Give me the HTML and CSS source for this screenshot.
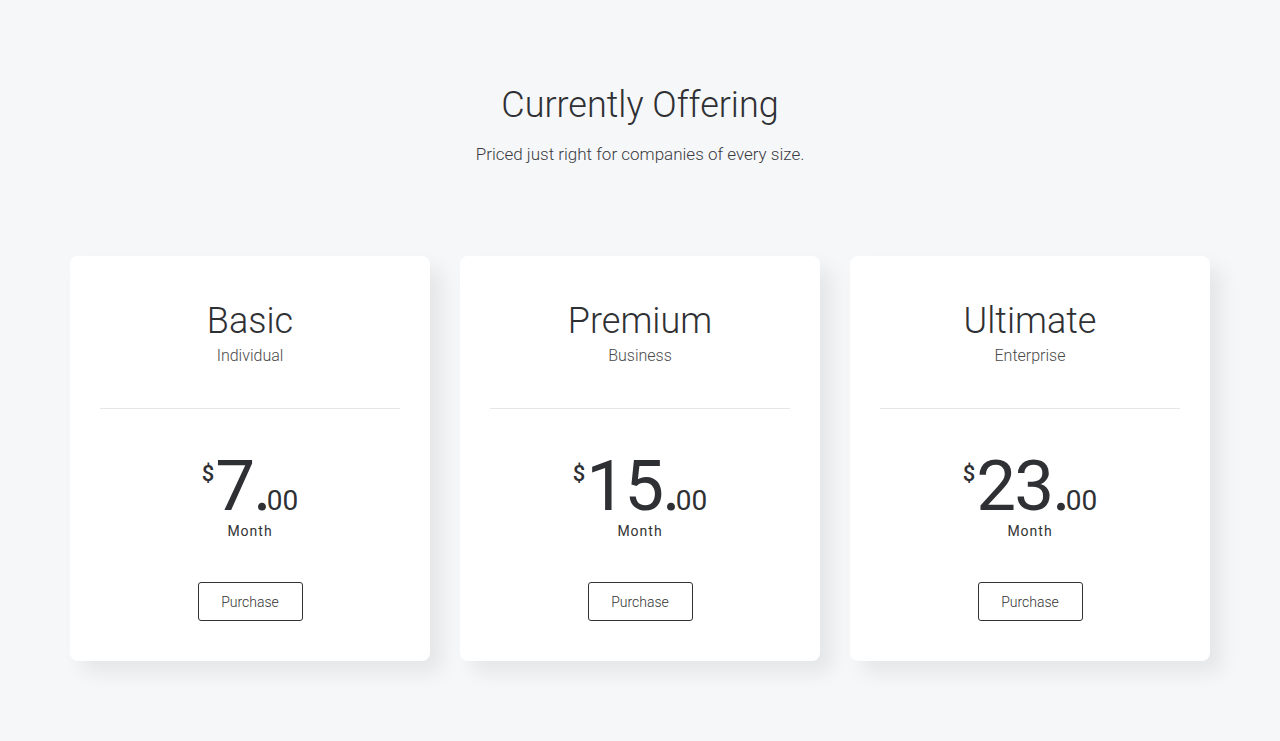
FILE: index.html
```html
<!DOCTYPE html>
<html lang="en">
<head>
<meta charset="utf-8">
<title>Currently Offering</title>
<link rel="stylesheet" href="styles.css">
</head>
<body>
<section class="pricing">
  <header class="intro">
    <h1 class="title">Currently Offering</h1>
    <p class="subtitle">Priced just right for companies of every size.</p>
  </header>
  <div class="cards">
    <article class="card">
      <h2 class="plan">Basic</h2>
      <p class="tier">Individual</p>
      <hr class="divider">
      <div class="price"><span class="currency">$</span><span class="amount">7.</span><span class="cents">00</span></div>
      <p class="period">Month</p>
      <button class="buy" type="button">Purchase</button>
    </article>
    <article class="card">
      <h2 class="plan">Premium</h2>
      <p class="tier">Business</p>
      <hr class="divider">
      <div class="price"><span class="currency">$</span><span class="amount">15.</span><span class="cents">00</span></div>
      <p class="period">Month</p>
      <button class="buy" type="button">Purchase</button>
    </article>
    <article class="card">
      <h2 class="plan">Ultimate</h2>
      <p class="tier">Enterprise</p>
      <hr class="divider">
      <div class="price"><span class="currency">$</span><span class="amount">23.</span><span class="cents">00</span></div>
      <p class="period">Month</p>
      <button class="buy" type="button">Purchase</button>
    </article>
  </div>
</section>
</body>
</html>
```

FILE: styles.css
```css
html, body {
  margin: 0;
  padding: 0;
}
body {
  background: #f6f7f9;
  font-family: Roboto, "Liberation Sans", sans-serif;
  color: #333;
  min-height: 741px;
}
.pricing {
  width: 1140px;
  margin: 0 auto;
}
.intro {
  text-align: center;
  padding-top: 84px;
}
.title {
  margin: 0;
  font-size: 36px;
  line-height: 43px;
  font-weight: 300;
  color: #2f3034;
}
.subtitle {
  margin: 15px 0 0;
  font-size: 17px;
  line-height: 24px;
  font-weight: 300;
  color: #3a3b3f;
}
.cards {
  display: flex;
  gap: 30px;
  margin-top: 90px;
}
.card {
  flex: 1;
  background: #fff;
  border-radius: 8px;
  box-shadow: 12px 12px 20px rgba(0, 0, 0, 0.07);
  padding: 41px 30px 40px;
  text-align: center;
  display: flex;
  flex-direction: column;
  align-items: center;
}
.plan {
  margin: 0;
  font-size: 36px;
  line-height: 48px;
  font-weight: 300;
  color: #2f3034;
}
.tier {
  margin: 1px 0 0;
  font-size: 16px;
  line-height: 20px;
  font-weight: 300;
  color: #4a4a4a;
}
.divider {
  align-self: stretch;
  border: 0;
  border-top: 1px solid #e6e6e6;
  margin: 42px 0 0;
}
.price {
  margin-top: 42px;
  height: 70px;
  display: flex;
  align-items: baseline;
  justify-content: center;
  color: #2f3034;
}
.price > span {
  line-height: 1;
}
.currency {
  align-self: flex-start;
  font-size: 22px;
  font-weight: 500;
  margin-top: 12px;
  margin-right: 1px;
}
.amount {
  font-size: 71px;
  font-weight: 400;
  letter-spacing: -2px;
}
.price > .amount {
  line-height: 70px;
}
.cents {
  font-size: 28px;
  font-weight: 400;
  margin-left: -3px;
}
.period {
  margin: 0;
  font-size: 14px;
  line-height: 20px;
  letter-spacing: 1px;
  color: #333;
}
.buy {
  margin-top: 41px;
  width: 105px;
  height: 39px;
  background: #fff;
  border: 1px solid #333;
  border-radius: 3px;
  font-family: Roboto, "Liberation Sans", sans-serif;
  font-size: 14px;
  font-weight: 300;
  color: #333;
  padding: 0;
  cursor: pointer;
}
```
